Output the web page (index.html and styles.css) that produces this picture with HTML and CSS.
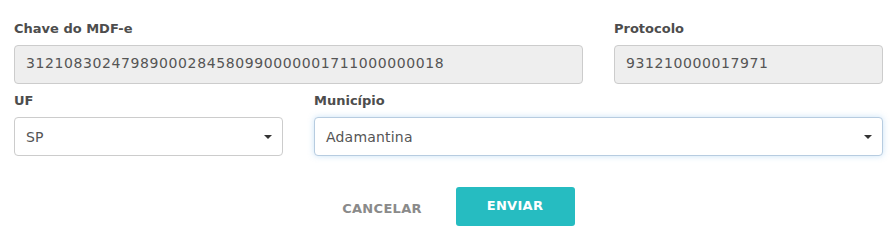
FILE: index.html
```html
<!DOCTYPE html>
<html lang="pt-BR">
<head>
    <meta charset="UTF-8">
    <meta name="viewport" content="width=device-width, initial-scale=1.0">
    <title>Encerrar MDF-e</title>
    <link rel="stylesheet" href="styles.css">
</head>
<body>
    <form class="mdfe-form">
        <div class="form-row row-key">
            <div class="field">
                <label class="field-label">Chave do MDF-e</label>
                <div class="field-input readonly">31210830247989000284580990000001711000000018</div>
            </div>
            <div class="field">
                <label class="field-label">Protocolo</label>
                <div class="field-input readonly">931210000017971</div>
            </div>
        </div>

        <div class="form-row row-place">
            <div class="field">
                <label class="field-label">UF</label>
                <div class="field-input select">
                    <span>SP</span>
                    <span class="caret"></span>
                </div>
            </div>
            <div class="field">
                <label class="field-label">Município</label>
                <div class="field-input select focused">
                    <span>Adamantina</span>
                    <span class="caret"></span>
                </div>
            </div>
        </div>

        <div class="form-actions">
            <button type="button" class="btn btn-cancel">CANCELAR</button>
            <button type="button" class="btn btn-send">ENVIAR</button>
        </div>
    </form>
</body>
</html>
```

FILE: styles.css
```css
body {
    margin: 0;
    background-color: white;
    font-family: "DejaVu Sans", sans-serif;
    color: #555;
}
.mdfe-form {
    padding: 20px 13px 0 14px;
}
.form-row {
    display: grid;
    column-gap: 31px;
    margin-bottom: 8px;
}
.row-key {
    grid-template-columns: 1fr 269px;
}
.row-place {
    grid-template-columns: 269px 1fr;
}
.field-label {
    display: block;
    font-size: 13px;
    font-weight: bold;
    line-height: 18px;
    color: #4d4d4d;
    margin-bottom: 7px;
}
.field-input {
    box-sizing: border-box;
    height: 39px;
    padding: 0 11px;
    border: 1px solid #cccccc;
    border-radius: 4px;
    font-size: 14px;
    letter-spacing: 0.2px;
    display: flex;
    align-items: center;
    color: #555;
}
.field-input.readonly {
    background-color: #eeeeee;
    padding-bottom: 4px;
    letter-spacing: 0.6px;
}
.field-input.select {
    background-color: white;
    justify-content: space-between;
    padding-right: 10px;
}
.field-input.focused {
    border-color: #b7cce0;
    box-shadow: 0 0 6px rgba(102, 175, 233, 0.35);
}
.caret {
    width: 0;
    height: 0;
    border-left: 4px solid transparent;
    border-right: 4px solid transparent;
    border-top: 4px solid #333;
    margin-top: 1px;
}
.form-actions {
    display: flex;
    justify-content: center;
    gap: 14px;
    margin-top: 31px;
}
.btn {
    width: 119px;
    height: 39px;
    border: none;
    border-radius: 3px;
    font-family: "DejaVu Sans", sans-serif;
    font-size: 13px;
    font-weight: bold;
    letter-spacing: 0.3px;
    padding: 0 0 3px;
    cursor: pointer;
}
.btn-cancel {
    background: none;
    color: #8a8a8a;
    padding-top: 3px;
    padding-bottom: 0;
}
.btn-send {
    background-color: #26bcc1;
    color: white;
}
```
